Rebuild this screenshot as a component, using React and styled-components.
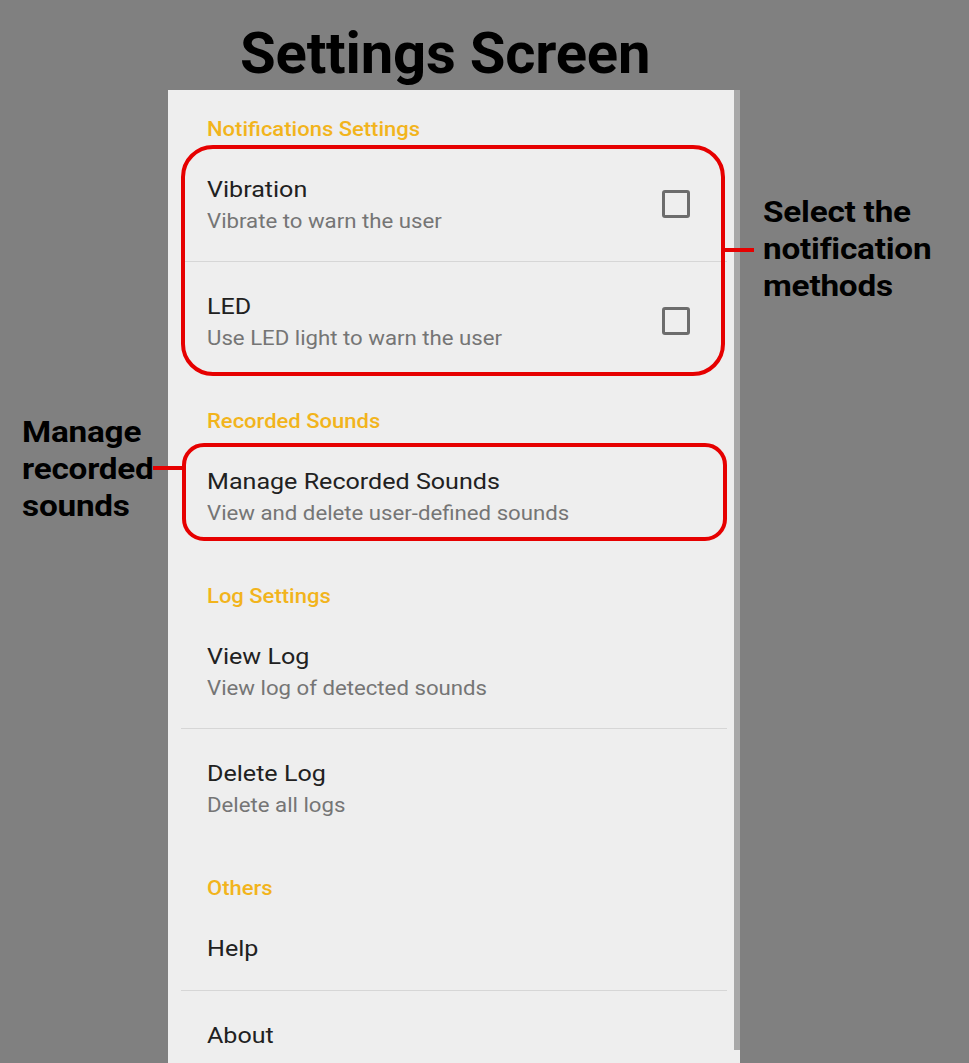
import React from 'react'
import styled, { createGlobalStyle } from 'styled-components'

const GlobalStyle = createGlobalStyle`
    html, body {
        margin: 0;
        padding: 0;
        background: #808080;
    }
    body {
        font-family: Roboto, "Noto Sans", "Liberation Sans", sans-serif;
    }
`

const Stage = styled.div`
    position: relative;
    width: 969px;
    height: 1063px;
    overflow: hidden;
    background: #808080;
    display: flex;
    flex-direction: column;
`

const Title = styled.h1`
    margin: 0;
    height: 90px;
    box-sizing: border-box;
    padding: 24px 0 0 240px;
    font-size: 58px;
    line-height: 58px;
    font-weight: 700;
    color: #000000;
    letter-spacing: -0.2px;
`

const Panel = styled.div`
    position: relative;
    margin-left: 168px;
    width: 572px;
    flex: 1;
    background: #eeeeee;
    overflow: hidden;
    padding-right: 6px;
    box-sizing: border-box;
`

const Scrollbar = styled.div`
    position: absolute;
    top: 0;
    right: 0;
    width: 6px;
    height: 960px;
    background: #a8a8a8;
`

// the screenshot is stretched sideways, so text is widened with scaleX
const Stretch = styled.div`
    transform: scaleX(${({ $x }) => $x});
    transform-origin: left center;
`

const Category = styled(Stretch)`
    padding: ${({ $first }) => ($first ? '29px' : '33px')} 0 6px 39px;
    transform-origin: 39px center;
    font-size: 20px;
    line-height: 20px;
    font-weight: 500;
    color: #f2b41c;
`

const Highlight = styled.div`
    position: relative;

    &::after {
        content: '';
        position: absolute;
        top: ${({ $inset }) => $inset[0]}px;
        right: ${({ $inset }) => $inset[1]}px;
        bottom: ${({ $inset }) => $inset[2]}px;
        left: ${({ $inset }) => $inset[3]}px;
        border: 4px solid #e60000;
        border-radius: ${({ $radius }) => $radius}px;
        pointer-events: none;
    }
`

const Row = styled.div`
    display: flex;
    align-items: center;
    padding: 32px 44px 28px 39px;
`

const Texts = styled.div`
    flex: 1;
    display: flex;
    flex-direction: column;
    gap: 6px;
`

const RowTitle = styled(Stretch)`
    font-size: 22px;
    line-height: 26px;
    color: #212121;
`

const RowSub = styled(Stretch)`
    font-size: 20px;
    line-height: 24px;
    color: #757575;
`

const Checkbox = styled.span`
    width: 28px;
    height: 28px;
    margin-bottom: 3px;
    box-sizing: border-box;
    border: 3px solid #6c6c6c;
    border-radius: 3px;
`

const Divider = styled.div`
    height: 1px;
    margin: 0 7px 0 13px;
    background: #d6d6d6;
`

const Note = styled(Stretch)`
    position: absolute;
    top: ${({ $top }) => $top}px;
    left: ${({ $left }) => $left}px;
    font-size: 30px;
    line-height: 37px;
    font-weight: 700;
    color: #000000;
    letter-spacing: -0.2px;
`

const Connector = styled.span`
    position: absolute;
    top: ${({ $top }) => $top}px;
    left: ${({ $left }) => $left}px;
    width: ${({ $width }) => $width}px;
    height: 4px;
    background: #e60000;
`

const Pref = ({ title, sub, checkbox }) => (
    <Row>
        <Texts>
            <RowTitle $x={1.14}>{title}</RowTitle>
            {sub && <RowSub $x={1.11}>{sub}</RowSub>}
        </Texts>
        {checkbox && <Checkbox />}
    </Row>
)

export default function App() {
    return (
        <Stage>
            <GlobalStyle />
            <Title>Settings Screen</Title>
            <Panel>
                <Scrollbar />
                <Category $x={1.1} $first>Notifications Settings</Category>
                <Highlight $inset={[0, 9, 2, 13]} $radius={32}>
                    <Pref title="Vibration" sub="Vibrate to warn the user" checkbox />
                    <Divider />
                    <Pref title="LED" sub="Use LED light to warn the user" checkbox />
                </Highlight>
                <Category $x={1.1}>Recorded Sounds</Category>
                <Highlight $inset={[6, 7, 12, 14]} $radius={22}>
                    <Pref title="Manage Recorded Sounds" sub="View and delete user-defined sounds" />
                </Highlight>
                <Category $x={1.1}>Log Settings</Category>
                <Pref title="View Log" sub="View log of detected sounds" />
                <Divider />
                <Pref title="Delete Log" sub="Delete all logs" />
                <Category $x={1.1}>Others</Category>
                <Pref title="Help" />
                <Divider />
                <Pref title="About" />
            </Panel>
            <Connector $top={248} $left={722} $width={32} />
            <Note $x={1.11} $top={193} $left={763}>
                Select the<br />notification<br />methods
            </Note>
            <Connector $top={466} $left={153} $width={31} />
            <Note $x={1.11} $top={413} $left={22}>
                Manage<br />recorded<br />sounds
            </Note>
        </Stage>
    )
}
